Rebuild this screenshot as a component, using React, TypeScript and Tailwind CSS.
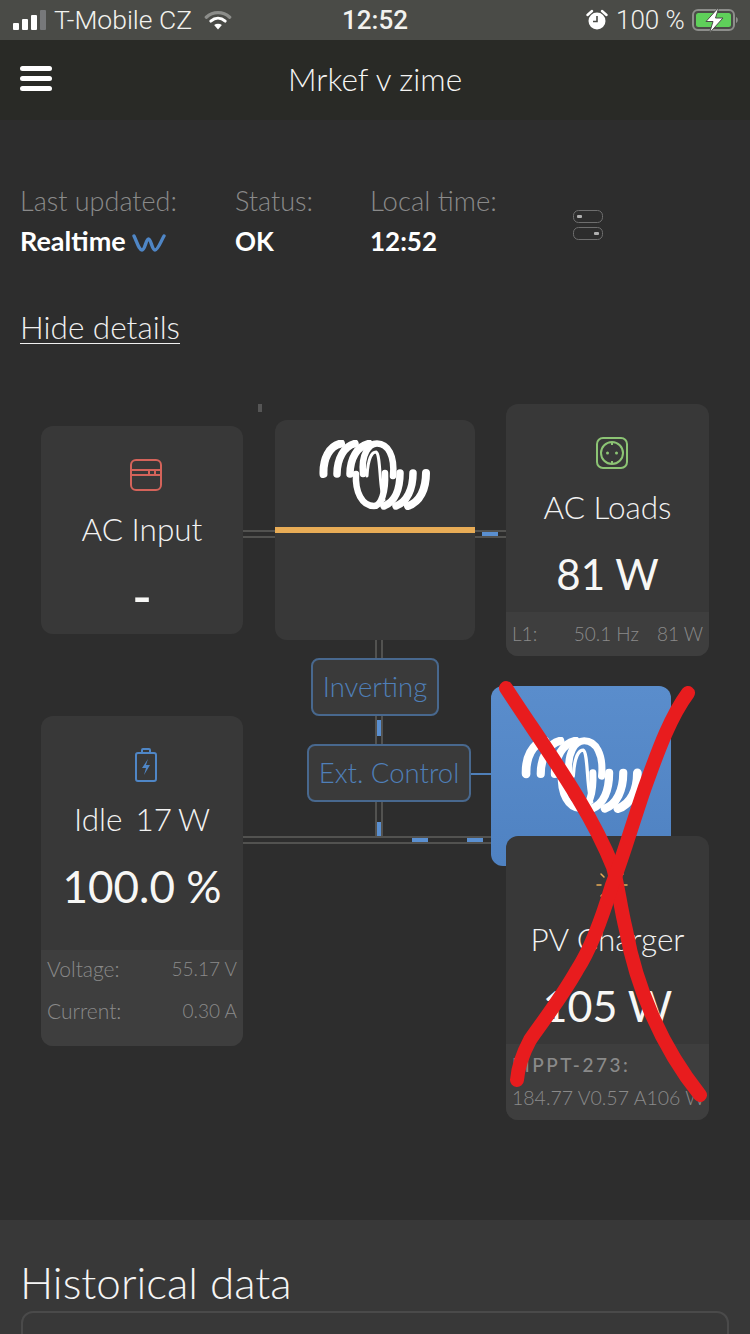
import type { ReactNode } from 'react';

function VictronLogo({ className }: { className?: string }) {
  return (
    <svg viewBox="0 0 112 70" className={className} fill="none" stroke="white" strokeLinecap="round">
      {/* left coils */}
      <path d="M4.5 34C4 19 10 6 22 3.5" strokeWidth="8" />
      <path d="M18 34C18 19 25 6 36 3.5" strokeWidth="7.5" />
      <path d="M31 34C31 19 38 6 50 3.5" strokeWidth="7.5" />
      {/* two big loops in the middle */}
      <path d="M44 34C42 14 50 3.5 58 3.5C69 3.5 76 16 74 36" strokeWidth="6.5" />
      <path d="M37 34C36 52 43 66 55 66C62 66 67 52 66 33" strokeWidth="6.5" />
      <path d="M48 36C49 18 53 12 57 12C62 14 60 50 65 60" strokeWidth="3" />
      {/* right coils */}
      <path d="M81 33C81 49 76 62 65 66" strokeWidth="7.5" />
      <path d="M94 33C94 49 88 62 77 66" strokeWidth="7.5" />
      <path d="M107 33C107 49 101 62 89 66" strokeWidth="8" />
    </svg>
  );
}

function AcInputIcon() {
  return (
    <svg viewBox="0 0 32 32" className="h-[32px] w-[32px]" fill="none" stroke="#d4635a" strokeWidth="2">
      <rect x="1" y="1" width="30" height="30" rx="5" />
      <path d="M1 11H31M1 16H31M19 11V16M25 11V16" />
    </svg>
  );
}

function SocketIcon() {
  return (
    <svg viewBox="0 0 32 32" className="h-[32px] w-[32px]" fill="none" stroke="#8cc474" strokeWidth="2">
      <rect x="1" y="1" width="30" height="30" rx="6" />
      <circle cx="16" cy="16" r="11" />
      <path d="M16 5V8M16 24V27" />
      <circle cx="11.5" cy="16" r="1.5" fill="#8cc474" stroke="none" />
      <circle cx="20.5" cy="16" r="1.5" fill="#8cc474" stroke="none" />
    </svg>
  );
}

function BatteryIcon() {
  return (
    <svg viewBox="0 0 22 34" className="h-[34px] w-[22px]" fill="none" stroke="#4f86c6" strokeWidth="2">
      <rect x="1" y="5" width="20" height="28" rx="2" />
      <path d="M7 5V2C7 1.4 7.4 1 8 1H14C14.6 1 15 1.4 15 2V5" />
      <path d="M13 11L7 20H11L9 27L15 17H11Z" fill="#4f86c6" stroke="none" />
    </svg>
  );
}

function SunIcon() {
  return (
    <svg viewBox="0 0 34 34" className="h-[34px] w-[34px]" fill="none" stroke="#e8ac56" strokeWidth="1.5" strokeLinecap="round">
      <path d="M2 17H6M28 17H32M6 6L9 9M28 6L25 9M6 28L9 25M28 28L25 25M17 2V6" />
    </svg>
  );
}

function Card({
  icon,
  title,
  value,
  className,
  titleClassName = '',
  valueClassName = 'text-[43px]',
  children,
}: {
  icon: ReactNode;
  title: string;
  value: string;
  className: string;
  titleClassName?: string;
  valueClassName?: string;
  children?: ReactNode;
}) {
  return (
    <div className={`absolute flex flex-col overflow-hidden rounded-[12px] bg-[#383838] ${className}`}>
      <div className="mt-[32px] flex h-[34px] items-center justify-center pl-[8px]">{icon}</div>
      <div className={`mt-[17px] h-[40px] whitespace-pre text-center text-[31.5px] font-light leading-[40px] text-[#f2f2f2] ${titleClassName}`}>{title}</div>
      <div className={`mt-[22px] h-[50px] text-center leading-[50px] text-[#f7f7f5] ${valueClassName}`}>{value}</div>
      {children}
    </div>
  );
}

export default function App() {
  return (
    <div className="relative h-[1334px] w-[750px] overflow-hidden bg-[#2d2d2d] font-['Lato',sans-serif]">
      {/* iOS status bar */}
      <div className="relative flex h-[40px] items-center bg-[#4a4b47] font-['Roboto',sans-serif] text-[26.5px] text-[#f2f2ee]">
        <div className="ml-[13px] flex items-end gap-[3px]">
          <div className="h-[7px] w-[6px] rounded-[1px] bg-white" />
          <div className="h-[11px] w-[6px] rounded-[1px] bg-white" />
          <div className="h-[15px] w-[6px] rounded-[1px] bg-white" />
          <div className="h-[20px] w-[6px] rounded-[1px] bg-[#77787a]" />
        </div>
        <span className="ml-[8px] font-light">T-Mobile CZ</span>
        <svg viewBox="0 0 24 18" className="ml-[12px] h-[20px] w-[28px]" fill="none" strokeLinecap="round">
          <path d="M1.5 6.5C7.5 1 16.5 1 22.5 6.5" stroke="#8c8d8a" strokeWidth="3" />
          <path d="M5.5 10C9.5 6.5 14.5 6.5 18.5 10" stroke="white" strokeWidth="2.6" />
          <path d="M12 17.5L8.5 13.5C10.5 12 13.5 12 15.5 13.5Z" fill="white" />
        </svg>
        <span className="absolute left-[342px] text-[26px] font-medium">12:52</span>
        <div className="absolute left-[586px] flex items-center">
          <svg viewBox="0 0 22 22" className="h-[22px] w-[22px]">
            <circle cx="11" cy="12" r="8.5" fill="white" />
            <path d="M11 7V12.5H7" fill="none" stroke="#4a4b47" strokeWidth="1.6" />
            <path d="M1.5 6L6 2M20.5 6L16 2" stroke="white" strokeWidth="2.4" strokeLinecap="round" />
          </svg>
          <span className="ml-[8px] text-[26px] font-light">100 %</span>
          <svg viewBox="0 0 46 26" className="ml-[7px] h-[26px] w-[46px]">
            <rect x="1" y="3" width="41" height="20" rx="5" fill="none" stroke="#8d8e8b" strokeWidth="2" />
            <rect x="4" y="6" width="35" height="14" rx="2.5" fill="#5fd05a" />
            <path d="M44 10V16C45.2 15.6 45.8 14.4 45.8 13C45.8 11.6 45.2 10.4 44 10Z" fill="#8d8e8b" />
            <path d="M27 0L14 14.5H21L17.5 26L31 11H23.5Z" fill="white" stroke="#4a4b47" strokeWidth="1" />
          </svg>
        </div>
      </div>

      {/* app header */}
      <div className="relative flex h-[80px] items-center justify-center bg-[#292a26]">
        <div className="absolute left-[20px] top-[26px] flex w-[32px] flex-col gap-[5px]">
          <div className="h-[5px] rounded-full bg-white" />
          <div className="h-[5px] rounded-full bg-white" />
          <div className="h-[5px] rounded-full bg-white" />
        </div>
        <span className="text-[31.5px] font-light text-[#f5f5f3]">Mrkef v zime</span>
      </div>

      {/* summary */}
      <div className="flex pl-[20px] pt-[61px]">
        <div className="w-[215px]">
          <div className="h-[40px] text-[27px] font-light leading-[40px] text-[#8a8a8a]">Last updated:</div>
          <div className="flex h-[40px] items-center text-[27px] font-bold leading-[40px] text-white">
            Realtime
            <svg viewBox="0 0 34 20" className="ml-[6px] mt-[3px] h-[20px] w-[34px]" fill="none" stroke="#4f86c6" strokeWidth="3.4" strokeLinecap="round">
              <path d="M2 3C5 9 7 17 10 17C13 17 14 6 16.5 6C19 6 20 17 23 17C26 17 29 8 32 3" />
            </svg>
          </div>
        </div>
        <div className="w-[135px]">
          <div className="h-[40px] text-[27px] font-light leading-[40px] text-[#8a8a8a]">Status:</div>
          <div className="h-[40px] text-[26px] font-bold leading-[40px] text-white">OK</div>
        </div>
        <div className="w-[203px]">
          <div className="h-[40px] text-[27.5px] font-light leading-[40px] text-[#8a8a8a]">Local time:</div>
          <div className="h-[40px] text-[26px] font-bold leading-[40px] text-white">12:52</div>
        </div>
        <svg viewBox="0 0 30 30" className="mt-[29px] h-[30px] w-[30px]" fill="none" stroke="#6e6e6e" strokeWidth="1">
          <rect x="0.5" y="0.5" width="29" height="12" rx="5" />
          <rect x="0.5" y="17.5" width="29" height="12" rx="5" />
          <rect x="4" y="5" width="5" height="3" rx="1" fill="#b0b0b0" stroke="none" />
          <rect x="21" y="22" width="5" height="3" rx="1" fill="#b0b0b0" stroke="none" />
        </svg>
      </div>

      <div className="ml-[20px] mt-[46px] h-[40px] text-[31.5px] font-light leading-[40px] text-[#f0f0f0] underline decoration-1 underline-offset-4">
        Hide details
      </div>

      {/* system overview diagram, nodes sit on a free canvas */}
      <div className="relative mt-[33px] h-[840px]">
        <div className="absolute left-[258px] top-[24px] h-[8px] w-[4px] bg-[#555555]" />

        {/* connections */}
        <div className="absolute left-[243px] top-[150px] h-[8px] w-[263px] border-y-2 border-[#525250]" />
        <div className="absolute left-[482px] top-[152px] h-[4px] w-[16px] bg-[#5a8fd0]" />
        <div className="absolute left-[375px] top-[260px] h-[196px] w-[8px] border-x-2 border-[#525250]" />
        <div className="absolute left-[377px] top-[340px] h-[16px] w-[4px] bg-[#5a8fd0]" />
        <div className="absolute left-[377px] top-[442px] h-[16px] w-[4px] bg-[#5a8fd0]" />
        <div className="absolute left-[243px] top-[456px] h-[8px] w-[250px] border-y-2 border-[#525250]" />
        <div className="absolute left-[412px] top-[458px] h-[4px] w-[16px] bg-[#5a8fd0]" />
        <div className="absolute left-[467px] top-[458px] h-[4px] w-[16px] bg-[#5a8fd0]" />
        <div className="absolute left-[471px] top-[393px] h-[2px] w-[22px] bg-[#4f7fb8]" />

        <Card icon={<AcInputIcon />} title="AC Input" value="-" valueClassName="text-[54px] font-medium" className="left-[41px] top-[46px] h-[208px] w-[202px]" />

        {/* inverter */}
        <div className="absolute left-[275px] top-[40px] h-[220px] w-[200px] rounded-[12px] bg-[#383838]">
          <VictronLogo className="absolute left-[44px] top-[20px] h-[70px] w-[112px]" />
          <div className="absolute left-0 top-[107px] h-[6px] w-full bg-[#e8ac56]" />
        </div>

        <Card icon={<SocketIcon />} title="AC Loads" value="81 W" valueClassName="text-[42px]" className="left-[506px] top-[24px] h-[252px] w-[203px]">
          <div className="mt-auto flex h-[44px] items-center bg-[#3e3e3e] px-[6px] text-[19px] font-light text-[#8a8a8a]">
            <span>L1:</span>
            <span className="ml-auto">50.1 Hz</span>
            <span className="ml-[18px]">81 W</span>
          </div>
        </Card>

        <Card icon={<BatteryIcon />} title="Idle  17 W" titleClassName="[word-spacing:-2px]" value="100.0 %" valueClassName="text-[44px]" className="left-[41px] top-[336px] h-[330px] w-[202px]">
          <div className="mt-auto h-[96px] bg-[#3e3e3e] px-[6px] text-[#8a8a8a]">
            <div className="flex h-[38px] items-center justify-between font-light">
              <span className="text-[21px]">Voltage:</span>
              <span className="text-[19px]">55.17 V</span>
            </div>
            <div className="mt-[4px] flex h-[38px] items-center justify-between font-light">
              <span className="text-[21px]">Current:</span>
              <span className="text-[19px]">0.30 A</span>
            </div>
          </div>
        </Card>

        {/* status pills */}
        <div className="absolute left-[311px] top-[278px] flex h-[58px] w-[128px] items-center justify-center rounded-[8px] border-2 border-[#48688e] bg-[#3a3a3a] pb-[1px] text-[27.5px] font-light text-[#4f7fb8]">
          Inverting
        </div>
        <div className="absolute left-[307px] top-[364px] flex h-[58px] w-[164px] items-center justify-center rounded-[8px] border-2 border-[#48688e] bg-[#3a3a3a] pb-[1px] text-[27.5px] font-light text-[#4f7fb8]">
          Ext. Control
        </div>

        {/* mppt */}
        <div className="absolute left-[491px] top-[306px] h-[180px] w-[180px] rounded-[12px] bg-linear-to-b from-[#5a8dcc] to-[#4f82c2]">
          <VictronLogo className="absolute left-[29px] top-[51px] h-[76px] w-[124px]" />
        </div>

        <Card icon={<SunIcon />} title="PV Charger" value="105 W" className="left-[506px] top-[456px] h-[284px] w-[203px]">
          <div className="mt-auto h-[76px] bg-[#3e3e3e] px-[6px] text-[#8a8a8a]">
            <div className="flex h-[42px] items-center text-[19px] font-medium tracking-[2.5px]">MPPT-273:</div>
            <div className="whitespace-nowrap text-[19.5px] font-light leading-[24px]">184.77 V0.57 A106 W</div>
          </div>
        </Card>
      </div>

      {/* historical data */}
      <div className="h-[200px] bg-[#383838] px-[21px] pt-[37px]">
        <div className="-ml-[1px] h-[50px] text-[44px] font-light leading-[50px] text-[#f5f5f5]">Historical data</div>
        <div className="mt-[4px] h-[100px] rounded-t-[12px] border-2 border-[#4a4a4a]" />
      </div>

      {/* red hand-drawn cross on top of the screenshot */}
      <svg viewBox="0 0 750 1334" className="pointer-events-none absolute left-0 top-0 h-[1334px] w-[750px]" fill="none" stroke="#e81c1e" strokeWidth="14" strokeLinecap="round" strokeLinejoin="round">
        <path d="M506 688C545 748 590 808 613 867C618 885 620 905 626 930C636 985 660 1045 700 1095" />
        <path d="M688 693C668 720 655 760 645 787C632 825 622 860 612 885C600 925 590 950 577 970C560 1000 540 1025 530 1040C522 1055 518 1068 517 1080" />
      </svg>
    </div>
  );
}
